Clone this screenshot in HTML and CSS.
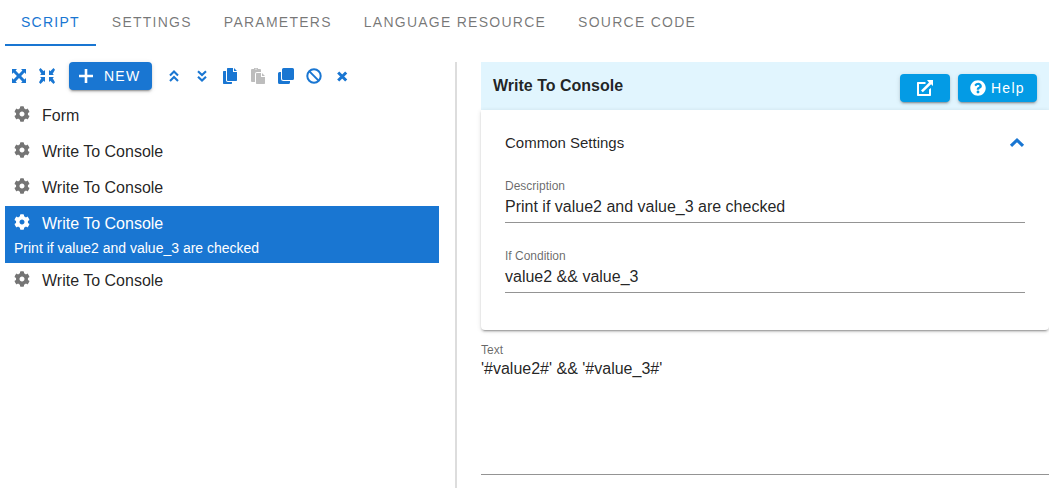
FILE: index.html
```html
<!DOCTYPE html>
<html lang="en">
<head>
<meta charset="utf-8">
<title>Script editor</title>
<link rel="stylesheet" href="styles.css">
</head>
<body>
<svg class="symbols" aria-hidden="true">
  <symbol id="cog" viewBox="0 0 512 512"><path d="M487.4 315.7l-42.6-24.6c4.3-23.2 4.3-47 0-70.2l42.6-24.6c4.9-2.8 7.1-8.6 5.5-14-11.1-35.6-30-67.8-54.7-94.6-3.8-4.1-10-5.1-14.8-2.3L380.8 110c-17.9-15.4-38.5-27.3-60.8-35.1V25.8c0-5.6-3.9-10.5-9.4-11.7-36.7-8.2-74.3-7.8-109.2 0-5.5 1.2-9.4 6.1-9.4 11.7V75c-22.2 7.9-42.8 19.8-60.8 35.1L88.7 85.5c-4.9-2.8-11-1.9-14.8 2.3-24.7 26.7-43.6 58.9-54.7 94.6-1.7 5.4.6 11.2 5.5 14L67.3 221c-4.3 23.2-4.3 47 0 70.2l-42.6 24.6c-4.9 2.8-7.1 8.6-5.5 14 11.1 35.6 30 67.8 54.7 94.6 3.8 4.1 10 5.1 14.8 2.3l42.6-24.6c17.9 15.4 38.5 27.3 60.8 35.1v49.2c0 5.6 3.9 10.5 9.4 11.7 36.7 8.2 74.3 7.8 109.2 0 5.5-1.2 9.4-6.1 9.4-11.7v-49.2c22.2-7.9 42.8-19.8 60.8-35.1l42.6 24.6c4.9 2.8 11 1.9 14.8-2.3 24.7-26.7 43.6-58.9 54.7-94.6 1.5-5.5-.7-11.3-5.6-14.1zM256 336c-44.1 0-80-35.9-80-80s35.9-80 80-80 80 35.9 80 80-35.9 80-80 80z"/></symbol>
</svg>
<nav class="tabs">
  <a class="tab active">SCRIPT</a>
  <a class="tab">SETTINGS</a>
  <a class="tab">PARAMETERS</a>
  <a class="tab">LANGUAGE RESOURCE</a>
  <a class="tab">SOURCE CODE</a>
</nav>
<main class="workspace">
  <section class="script">
    <div class="toolbar">
      <span class="tool"><svg class="icon" viewBox="0 0 16 16"><path d="M1 1h5L4.600 2.500 8 5.900l3.400-3.400L10 1h5v5l-1.500-1.400L10.100 8l3.400 3.400L15 10v5h-5l1.400-1.500L8 10.100l-3.400 3.400L6 15H1v-5l1.500 1.400L5.900 8 2.500 4.600 1 6z"/></svg></span>
      <span class="tool"><svg class="icon" viewBox="0 0 16 16"><path id="inward" d="M1.500 0 4.700 3.200 6 2v5H1l1.300-1.300L0 1.800z"/><path d="M14.500 0 11.300 3.200 10 2v5h5l-1.300-1.300L16 1.800zM1.500 16l3.200-3.200L6 14V9H1l1.300 1.300L0 14.200zM14.500 16l-3.200-3.200L10 14V9h5l-1.300 1.300L16 14.200z"/></svg></span>
      <button class="btn new"><svg class="icon" viewBox="0 0 16 16"><path d="M6.700 1h2.600v5.700H15v2.600H9.300V15H6.700V9.300H1V6.700h5.700z"/></svg>NEW</button>
      <span class="tool"><svg class="icon stroked" viewBox="0 0 16 16"><path d="m4 7.400 4-3.900 4 3.900M4 12.900 8 9l4 3.900"/></svg></span>
      <span class="tool"><svg class="icon stroked" viewBox="0 0 16 16"><path d="m4 3.200 4 3.900 4-3.900M4 8.700l4 3.900 4-3.900"/></svg></span>
      <span class="tool"><svg class="icon" viewBox="0 0 16 16"><path d="M10 14v1.300a.7.7 0 0 1-.7.7H1.700a.7.700 0 0 1-.7-.7V3.700A.7.700 0 0 1 1.700 3H4v9.300A1.700 1.700 0 0 0 5.700 14zM11 0v4h4v8.300a.7.700 0 0 1-.7.700H5.700a.7.700 0 0 1-.7-.7V.7A.7.700 0 0 1 5.700 0zM12 0l3 3h-3z"/></svg></span>
      <span class="tool disabled"><svg class="icon" viewBox="0 0 16 16"><path fill-rule="evenodd" d="M4 1a2 2 0 0 1 4 0h2a1 1 0 0 1 1 1v2H7a2 2 0 0 0-2 2v8H2a1 1 0 0 1-1-1V2a1 1 0 0 1 1-1zm2-.6a.7.700 0 1 0 0 1.400A.7.700 0 0 0 6 .4zM11 5v4h4v6.300a.7.700 0 0 1-.7.700H6.700a.7.700 0 0 1-.7-.7V5.700A.7.700 0 0 1 6.700 5zM12 5l3 3h-3z"/></svg></span>
      <span class="tool"><svg class="icon" viewBox="0 0 16 16"><path d="M5.500 0h9A1.500 1.500 0 0 1 16 1.500v9a1.500 1.500 0 0 1-1.500 1.500h-9A1.500 1.500 0 0 1 4 10.500v-9A1.500 1.500 0 0 1 5.500 0z"/><path d="M12 13v1.500a1.500 1.500 0 0 1-1.500 1.500h-9A1.500 1.500 0 0 1 0 14.500v-9A1.500 1.500 0 0 1 1.500 4H3v6.500A2.500 2.500 0 0 0 5.500 13z"/></svg></span>
      <span class="tool"><svg class="icon ban" viewBox="0 0 16 16"><circle cx="8" cy="8" r="6.700"/><path d="m3.400 3.400 9.200 9.200"/></svg></span>
      <span class="tool"><svg class="icon cross" viewBox="0 0 16 16"><path d="m4.200 4.500 8 8m0-8-8 8"/></svg></span>
    </div>
    <div class="tree">
      <div class="row"><div class="title"><svg class="icon"><use href="#cog"/></svg><span>Form</span></div></div>
      <div class="row"><div class="title"><svg class="icon"><use href="#cog"/></svg><span>Write To Console</span></div></div>
      <div class="row"><div class="title"><svg class="icon"><use href="#cog"/></svg><span>Write To Console</span></div></div>
      <div class="row selected"><div class="title"><svg class="icon"><use href="#cog"/></svg><span>Write To Console</span></div><div class="note">Print if value2 and value_3 are checked</div></div>
      <div class="row"><div class="title"><svg class="icon"><use href="#cog"/></svg><span>Write To Console</span></div></div>
    </div>
  </section>
  <div class="splitter"></div>
  <section class="details">
    <header class="head">
      <h1>Write To Console</h1>
      <button class="btn open"><svg class="icon" viewBox="0 0 16 16"><path d="M8.500 2v2H2v10h10V9.500l2-1.500v7.300a.7.700 0 0 1-.7.700H.7a.7.700 0 0 1-.7-.7V2.700A.7.700 0 0 1 .7 2zM10 0h6v6l-1.900-1.800-8.300 8L4 10.400l8-8z"/></svg></button>
      <button class="btn help"><svg class="icon" viewBox="0 0 512 512"><path d="M504 256c0 136.997-111.043 248-248 248S8 392.997 8 256C8 119.083 119.043 8 256 8s248 111.083 248 248zM262.655 90c-54.497 0-89.255 22.957-116.549 63.758-3.536 5.286-2.353 12.415 2.715 16.258l34.699 26.310c5.205 3.947 12.621 3.008 16.665-2.122 17.864-22.658 30.113-35.797 57.303-35.797 20.429 0 45.698 13.148 45.698 32.958 0 14.976-12.363 22.667-32.534 33.976C247.128 238.528 216 254.941 216 296v4c0 6.627 5.373 12 12 12h56c6.627 0 12-5.373 12-12v-1.333c0-28.462 83.186-29.647 83.186-106.667 0-58.002-60.165-102-116.531-102zM256 338c-25.365 0-46 20.635-46 46 0 25.364 20.635 46 46 46s46-20.636 46-46c0-25.364-20.635-46-46-46z"/></svg>Help</button>
    </header>
    <div class="card">
      <div class="card-head"><span>Common Settings</span><svg class="icon chevron" viewBox="0 0 16 16"><path d="m2 10.800 6-5.700 6 5.700"/></svg></div>
      <div class="field"><label>Description</label><div class="value">Print if value2 and value_3 are checked</div></div>
      <div class="field"><label>If Condition</label><div class="value">value2 &amp;&amp; value_3</div></div>
    </div>
    <div class="field area"><label>Text</label><div class="value">'#value2#' &amp;&amp; '#value_3#'</div></div>
  </section>
</main>
</body>
</html>
```
FILE: styles.css
```css
* { box-sizing: border-box; }
body {
  margin: 0;
  height: 488px;
  overflow: hidden;
  background: #fff;
  color: rgba(0, 0, 0, .87);
  font: 16px/24px "Liberation Sans", Arial, sans-serif;
}
.symbols { display: none; }
.icon { display: block; width: 16px; height: 16px; flex: none; fill: currentColor; }

.tabs { display: flex; height: 46px; padding-left: 5px; }
.tab {
  height: 46px;
  padding: 0 16px;
  border-bottom: 2px solid transparent;
  color: rgba(0, 0, 0, .54);
  font-size: 14px;
  line-height: 44px;
  letter-spacing: 1.25px;
  white-space: nowrap;
}
.tab.active { color: #1976d2; border-color: #1976d2; }

.workspace { display: flex; height: 442px; padding: 16px 9px 0 5px; }
.script { width: 434px; margin-right: 16px; }
.splitter { width: 2px; background: #ddd; }
.details { flex: 1; margin-left: 24px; }

.toolbar { display: flex; height: 28px; color: #1976d2; }
.tool { width: 28px; padding: 6px; }
.disabled { color: #bdbdbd; }
.stroked, .chevron, .ban, .cross { fill: none; stroke: currentColor; }
.stroked { stroke-width: 2.1; }
.ban { stroke-width: 2; }
.cross { stroke-width: 3; }
.chevron { stroke-width: 3.2; }

.btn {
  display: flex;
  align-items: center;
  height: 28px;
  padding: 0;
  border: 0;
  border-radius: 4px;
  background: #039be5;
  color: #fff;
  font: 14px/28px "Liberation Sans", Arial, sans-serif;
  letter-spacing: 1.25px;
  box-shadow: 0 3px 1px -2px rgba(0, 0, 0, .2), 0 2px 2px rgba(0, 0, 0, .14), 0 1px 5px rgba(0, 0, 0, .12);
}
.new { width: 83px; margin: 0 8px; padding-left: 9px; gap: 10px; background: #1976d2; }

.tree { padding-top: 8px; }
.row { min-height: 36px; padding: 4px 9px 0; }
.title { display: flex; gap: 12px; height: 26px; line-height: 27px; }
.title .icon { margin-top: 4px; color: #757575; }
.selected { height: 57px; background: #1976d2; color: #fff; }
.selected .title .icon { color: #fff; }
.note { font-size: 14px; line-height: 24px; }

.head { display: flex; height: 48px; padding: 12px 12px 0; background: #e1f5fe; }
h1 { flex: 1; margin: 0; font-size: 16px; line-height: 24px; }
.open { width: 50px; margin-right: 8px; justify-content: center; }
.help { width: 79px; padding-left: 12px; gap: 5px; }
.card {
  height: 220px;
  padding: 0 24px;
  background: #fff;
  border-radius: 0 0 4px 4px;
  box-shadow: 0 3px 1px -2px rgba(0, 0, 0, .2), 0 2px 2px rgba(0, 0, 0, .14), 0 1px 5px rgba(0, 0, 0, .12);
  clip-path: inset(-3px 0 -8px -5px);
}
.card-head { display: flex; align-items: center; justify-content: space-between; height: 64px; padding-top: 2px; font-size: 15px; }
.chevron { width: 16px; color: #1976d2; }
.field { display: flex; flex-direction: column; height: 49px; border-bottom: 1px solid #949494; }
.field + .field { margin-top: 21px; }
label { height: 20px; font-size: 12px; line-height: 24px; color: rgba(0, 0, 0, .6); }
.value { line-height: 26px; }
.area { height: 137px; margin-top: 8px; }
.area label { height: 18px; }
```
